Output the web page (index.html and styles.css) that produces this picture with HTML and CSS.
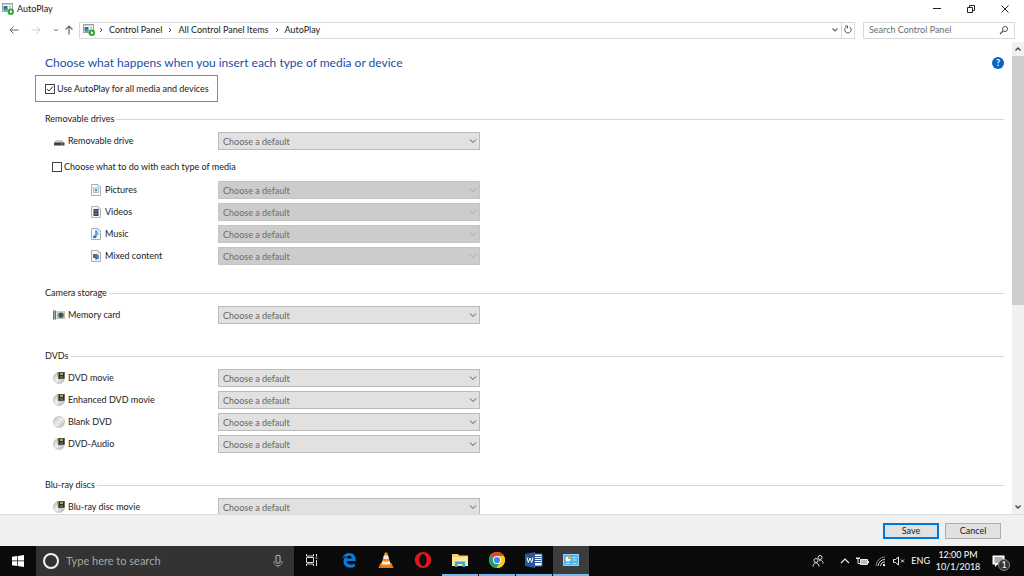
FILE: index.html
```html
<!DOCTYPE html>
<html lang="en">
<head>
    <meta charset="UTF-8">
    <meta name="viewport" content="width=device-width, initial-scale=1.0">
    <title>AutoPlay</title>
    <link rel="stylesheet" href="styles.css">
</head>
<body>
    <svg class="sprite" aria-hidden="true">
        <defs>
            <linearGradient id="disc-shade" x1="0" y1="0" x2="1" y2="1">
                <stop offset="0" stop-color="#b4b4b4"/>
                <stop offset="0.5" stop-color="#f2f2f2"/>
                <stop offset="1" stop-color="#a6a6a6"/>
            </linearGradient>
        </defs>
        <symbol id="autoplay" viewBox="0 0 12 12">
            <rect x="0.5" y="0.5" width="10" height="8" fill="#fff" stroke="#9aa5ab"/>
            <rect x="1" y="1" width="9" height="1" fill="#c6d2d8"/>
            <path d="M1.5 3h4v4.5h-4z" fill="#2e6f8e"/>
            <path d="M3 5h2.5v2.5H2z" fill="#3d9a80"/>
            <path d="M7 3.5h2.5M7 5h2" stroke="#a8b4ba"/>
            <circle cx="8.8" cy="8.8" r="3.2" fill="#2ea52e"/>
            <path d="M8 7v3.6l2.6-1.8z" fill="#fff"/>
        </symbol>
        <symbol id="drive" viewBox="0 0 12 12">
            <path d="M2.5 5h7L11 8H1z" fill="#c9cccc"/>
            <rect x="1" y="7.5" width="10.5" height="3" rx="0.5" fill="#3c4240"/>
            <rect x="8" y="8.5" width="2" height="1" fill="#46c25a"/>
        </symbol>
        <symbol id="page" viewBox="0 0 12 12">
            <path d="M1.5 0.5h6.5l2.5 2.5v8.5h-9z" fill="#f6f7f8" stroke="#aab0b4"/>
            <path d="M8 0.5V3h2.5" fill="#dfe3e6" stroke="#aab0b4" stroke-width="0.6"/>
        </symbol>
        <symbol id="pictures" viewBox="0 0 12 12">
            <use href="#page"/>
            <rect x="3.5" y="4" width="5" height="4.5" fill="#e9f1f7" stroke="#9fb3c2" stroke-width="0.8"/>
            <path d="M5 5.2h2v2H5z" fill="#3f82b0"/>
        </symbol>
        <symbol id="videos" viewBox="0 0 12 12">
            <use href="#page"/>
            <rect x="3.5" y="3" width="5" height="7" fill="#3b3f45"/>
            <path d="M5 4h2v2H5zM5 7h2v2H5z" fill="#5c7390"/>
            <path d="M4 3v7M8 3v7" stroke="#aaa" stroke-width="0.5" stroke-dasharray="0.7 0.7"/>
        </symbol>
        <symbol id="music" viewBox="0 0 12 12">
            <use href="#page"/>
            <path d="M6 2.5v6" stroke="#1673c4" stroke-width="1.2"/>
            <path d="M6 2.5c0 2 2.500 2 2 4.500" fill="none" stroke="#1673c4"/>
            <ellipse cx="4.8" cy="8.8" rx="1.8" ry="1.4" fill="#1673c4"/>
        </symbol>
        <symbol id="mixed" viewBox="0 0 12 12">
            <use href="#page"/>
            <path d="M3 4h4v4H3z" fill="#4c6f8c"/>
            <path d="M6 5.5h3v3.5H6z" fill="#7b93a5"/>
            <path d="M7 4.5v4M7 5l1.5 1" stroke="#1d6fb5"/>
            <circle cx="6.2" cy="8.7" r="1.1" fill="#1d6fb5"/>
        </symbol>
        <symbol id="card" viewBox="0 0 12 12">
            <rect x="0" y="1.5" width="3" height="9" fill="#6d7072"/>
            <rect x="1" y="2" width="1" height="8" fill="#a5a8aa"/>
            <rect x="3.5" y="2" width="8.5" height="8" fill="#b9bcbd"/>
            <rect x="4" y="2.5" width="7.5" height="1" fill="#dedfe0"/>
            <circle cx="8" cy="6.2" r="2.6" fill="#52585a"/>
            <circle cx="8" cy="6.2" r="1.4" fill="#1e5a58"/>
        </symbol>
        <symbol id="disc" viewBox="0 0 12 12">
            <circle cx="6" cy="6" r="5.6" fill="url(#disc-shade)" stroke="#b0b0b0" stroke-width="0.5"/>
            <circle cx="6" cy="6" r="1.6" fill="#f6f6f6" stroke="#c4c4c4" stroke-width="0.5"/>
        </symbol>
        <symbol id="disc-movie" viewBox="0 0 12 12">
            <circle cx="6" cy="6" r="5.6" fill="url(#disc-shade)" stroke="#b0b0b0" stroke-width="0.5"/>
            <path d="M4.5 0H12v6.5L5 7.5z" fill="#6d6e70"/>
            <path d="M6 0.5h5v6H6z" fill="#2d2e31"/>
            <path d="M7 1h3v2H7z" fill="#c79a4e"/>
            <path d="M7 4h3v2H7z" fill="#5a6068"/>
        </symbol>
    </svg>

    <header class="titlebar">
        <svg class="icon"><use href="#autoplay"/></svg>
        <h1 class="window-title">AutoPlay</h1>
        <div class="window-buttons">
            <button aria-label="Minimize"><svg width="10" height="10"><path d="M1 4.5h8" stroke="#222"/></svg></button>
            <button aria-label="Restore"><svg width="10" height="10"><path d="M1.5 3.5h5v5h-5zM3.5 3.5v-2h5v5h-2" fill="none" stroke="#222"/></svg></button>
            <button aria-label="Close"><svg width="10" height="10"><path d="M1.5 1.5l7 7M8.5 1.5l-7 7" stroke="#222"/></svg></button>
        </div>
    </header>

    <nav class="navbar">
        <div class="history">
            <button aria-label="Back"><svg width="10" height="10"><path d="M9.5 5H1M4.5 1.5L1 5l3.5 3.5" fill="none" stroke="#666"/></svg></button>
            <button aria-label="Forward"><svg width="10" height="10"><path d="M0.5 5H9M5.5 1.5L9 5 5.5 8.5" fill="none" stroke="#ccc"/></svg></button>
            <button class="narrow" aria-label="Recent locations"><svg width="6" height="10"><path d="M1 4l2 2 2-2" fill="none" stroke="#777"/></svg></button>
            <button class="narrow" aria-label="Up"><svg width="10" height="10"><path d="M5 9.5V1M1.5 4.5L5 1l3.5 3.5" fill="none" stroke="#666" stroke-width="1.2"/></svg></button>
        </div>
        <div class="address">
            <svg class="icon"><use href="#autoplay"/></svg>
            <svg class="sep" width="4" height="8"><path d="M1 2l2 2-2 2" fill="none" stroke="#555"/></svg>
            <a href="#">Control Panel</a>
            <svg class="sep" width="4" height="8"><path d="M1 2l2 2-2 2" fill="none" stroke="#555"/></svg>
            <a href="#">All Control Panel Items</a>
            <svg class="sep" width="4" height="8"><path d="M1 2l2 2-2 2" fill="none" stroke="#555"/></svg>
            <a href="#">AutoPlay</a>
            <button class="previous" aria-label="Previous locations"><svg width="8" height="8"><path d="M1.500 2.500L4 5l2.500-2.500" fill="none" stroke="#666" stroke-width="1.2"/></svg></button>
            <button class="refresh" aria-label="Refresh"><svg width="10" height="10"><path d="M6.500 2A3.200 3.200 0 1 1 3 2.300M2 1h2.500v2.500" fill="none" stroke="#555"/></svg></button>
        </div>
        <div class="search">
            <input type="text" placeholder="Search Control Panel" aria-label="Search Control Panel">
            <svg width="10" height="10"><circle cx="6" cy="4" r="2.5" fill="none" stroke="#555"/><path d="M4 6L1 9" stroke="#555" stroke-width="1.2"/></svg>
        </div>
    </nav>

    <div class="view">
        <main class="content">
            <div class="heading">
                <h2>Choose what happens when you insert each type of media or device</h2>
                <button class="help" aria-label="Help">?</button>
            </div>
            <div class="highlight">
                <input type="checkbox" id="use-autoplay" checked>
                <label for="use-autoplay">Use AutoPlay for all media and devices</label>
            </div>

            <section class="group group-removable">
                <h3>Removable drives</h3>
                <div class="row">
                    <label for="removable"><svg class="icon"><use href="#drive"/></svg>Removable drive</label>
                    <select id="removable"><option>Choose a default</option></select>
                </div>
                <div class="each-type">
                    <input type="checkbox" id="each-type">
                    <label for="each-type">Choose what to do with each type of media</label>
                </div>
                <div class="row sub">
                    <label for="pics"><svg class="icon"><use href="#pictures"/></svg>Pictures</label>
                    <select id="pics" disabled><option>Choose a default</option></select>
                </div>
                <div class="row sub">
                    <label for="vids"><svg class="icon"><use href="#videos"/></svg>Videos</label>
                    <select id="vids" disabled><option>Choose a default</option></select>
                </div>
                <div class="row sub">
                    <label for="songs"><svg class="icon"><use href="#music"/></svg>Music</label>
                    <select id="songs" disabled><option>Choose a default</option></select>
                </div>
                <div class="row sub">
                    <label for="mixed-content"><svg class="icon"><use href="#mixed"/></svg>Mixed content</label>
                    <select id="mixed-content" disabled><option>Choose a default</option></select>
                </div>
            </section>

            <section class="group">
                <h3>Camera storage</h3>
                <div class="row">
                    <label for="memory-card"><svg class="icon"><use href="#card"/></svg>Memory card</label>
                    <select id="memory-card"><option>Choose a default</option></select>
                </div>
            </section>

            <section class="group">
                <h3>DVDs</h3>
                <div class="row">
                    <label for="dvd"><svg class="icon"><use href="#disc-movie"/></svg>DVD movie</label>
                    <select id="dvd"><option>Choose a default</option></select>
                </div>
                <div class="row">
                    <label for="enhanced-dvd"><svg class="icon"><use href="#disc-movie"/></svg>Enhanced DVD movie</label>
                    <select id="enhanced-dvd"><option>Choose a default</option></select>
                </div>
                <div class="row">
                    <label for="blank-dvd"><svg class="icon"><use href="#disc"/></svg>Blank DVD</label>
                    <select id="blank-dvd"><option>Choose a default</option></select>
                </div>
                <div class="row">
                    <label for="dvd-audio"><svg class="icon"><use href="#disc-movie"/></svg>DVD-Audio</label>
                    <select id="dvd-audio"><option>Choose a default</option></select>
                </div>
            </section>

            <section class="group">
                <h3>Blu-ray discs</h3>
                <div class="row">
                    <label for="bluray"><svg class="icon"><use href="#disc-movie"/></svg>Blu-ray disc movie</label>
                    <select id="bluray"><option>Choose a default</option></select>
                </div>
            </section>
        </main>
        <div class="scrollbar">
            <button aria-label="Scroll up"><svg width="8" height="8"><path d="M1.500 5.500L4 3l2.500 2.500" fill="none" stroke="#444" stroke-width="1.4"/></svg></button>
            <div class="track"><div class="thumb"></div></div>
            <button aria-label="Scroll down"><svg width="8" height="8"><path d="M1.500 2.500L4 5l2.500-2.500" fill="none" stroke="#444" stroke-width="1.4"/></svg></button>
        </div>
    </div>

    <div class="actions">
        <button class="btn btn-default">Save</button>
        <button class="btn">Cancel</button>
    </div>

    <footer class="taskbar">
        <button class="start" aria-label="Start">
            <svg width="12" height="12"><path d="M0 1.700L5.300 1v4.600H0zM6 0.900L12 0v5.600H6zM0 6.300h5.300v4.700L0 10.300zM6 6.300h6V12l-6-0.900z" fill="#fff"/></svg>
        </button>
        <div class="cortana">
            <svg width="18" height="18"><circle cx="9" cy="9" r="7" fill="none" stroke="#f2f2f2" stroke-width="2"/></svg>
            <input type="text" placeholder="Type here to search" aria-label="Type here to search">
            <svg width="10" height="14"><rect x="3" y="1.5" width="4" height="7.5" rx="0.5" fill="none" stroke="#bbb"/><path d="M1 7v2.500L3 11.500h4l2-2V7M5 11.500V13.500" fill="none" stroke="#aaa" stroke-width="0.8"/></svg>
        </div>
        <div class="apps">
            <button aria-label="Task View"><svg width="14" height="14"><path d="M1.500 1v2h7V1M1.500 13v-2h7v2M1.500 4.500h7v5h-7zM11.500 1v2.500M11.500 7v6M10.500 5h2" fill="none" stroke="#ddd"/></svg></button>
            <button aria-label="Edge"><svg width="16" height="16" viewBox="0 0 18 18"><path d="M1.500 8C2.200 3.500 5.200 1 9.200 1c4.600 0 7.300 3.200 7.300 7.400v1.800H6.200c.2 2.700 2.300 4 4.900 4 1.800 0 3.200-.5 4.500-1.300v3.400c-1.500.9-3.300 1.300-5.200 1.300-4.600 0-7.600-2.700-7.600-6.900 0-2.700 1.300-4.900 3.700-6.200C4 4.800 2.300 6 1.500 8zM6.300 7.200H12c0-2-.9-3.100-2.700-3.100-1.700 0-2.800 1.200-3 3.100z" fill="#0f7bd8"/></svg></button>
            <button aria-label="VLC"><svg width="16" height="18" viewBox="0 0 16 18"><path d="M2.500 12h11l2 5H.5z" fill="#e8780c"/><path d="M6.800 1.500h2.400L13 14.500q-5 2-10 0z" fill="#f58a12"/><path d="M6 4.500h4l.9 3q-2.900 1.200-5.800 0zM4.300 10q3.700 1.500 7.400 0l.8 2.700q-4.500 1.700-9 0z" fill="#eee"/></svg></button>
            <button aria-label="Opera"><svg width="18" height="18"><ellipse cx="9" cy="9" rx="8.2" ry="8" fill="#e0161f"/><ellipse cx="9" cy="9" rx="3.6" ry="6" fill="#0a0a0a"/></svg></button>
            <button class="open" aria-label="File Explorer"><svg width="16" height="16"><path d="M0 2h6l1 1.500h9V14H0z" fill="#f3cf6b"/><path d="M0 5h16v9H0z" fill="#fde79b"/><path d="M3 15V9.500h10V15h-2.500v-3h-5v3z" fill="#35a5e0"/></svg></button>
            <button class="open" aria-label="Chrome"><svg width="18" height="18"><circle cx="9" cy="9" r="8" fill="#fbc916"/><path d="M9 9L2.100 5A8 8 0 0 1 15.900 5z" fill="#db4437"/><path d="M2.100 5A8 8 0 0 0 8.500 17L12.500 11 9 9z" fill="#1da260"/><path d="M9 5h6.900A8 8 0 0 1 8.500 17L12.500 11z" fill="#fbc916"/><circle cx="9" cy="9" r="4" fill="#fff"/><circle cx="9" cy="9" r="3.1" fill="#4285f4"/></svg></button>
            <button class="open" aria-label="Word"><svg width="18" height="16"><rect x="8" y="2" width="9" height="12" fill="#fff" stroke="#2b579a"/><path d="M10 4.500h6M10 6.500h6M10 8.500h6M10 10.500h6" stroke="#2b579a"/><path d="M0 2l10-2v16L0 14z" fill="#2b579a"/><path d="M2 5.500l1.300 5L5 6l1.700 4.500L8 5.500" fill="none" stroke="#fff"/></svg></button>
            <button class="open active" aria-label="Control Panel"><svg width="16" height="14"><rect x="0.5" y="1.5" width="15" height="11" fill="#4fb4ea" stroke="#8fd2f5"/><circle cx="5" cy="6" r="2.5" fill="#fff"/><path d="M5 6V3.500A2.500 2.500 0 0 1 7.500 6z" fill="#f5a623"/><path d="M9.500 4.500h4M9.500 7h4M3 10.500h4M9.500 10.500h4" stroke="#c3e8fb"/><path d="M12 4v1M10.500 6.500v1" stroke="#f5c623"/></svg></button>
        </div>
        <div class="tray">
            <button aria-label="People"><svg width="12" height="14"><circle cx="8" cy="3.5" r="2" fill="none" stroke="#ddd"/><circle cx="4" cy="6.5" r="2" fill="none" stroke="#ddd"/><path d="M1 12.500c0-5 6-5 6 0M7 7c2-1.500 4-.5 4 2.500" fill="none" stroke="#ddd"/></svg></button>
            <button aria-label="Show hidden icons"><svg width="10" height="8"><path d="M1 6l4-4 4 4" fill="none" stroke="#eee" stroke-width="1.2"/></svg></button>
            <button aria-label="Battery"><svg width="13" height="10"><path d="M4.500 3.500h7v5h-7z" fill="#bbb" stroke="#eee"/><path d="M12.500 5v2M0 2.500h4M1 1v1.500M3 1v1.500M2 3v4.500h2" fill="none" stroke="#eee"/></svg></button>
            <button aria-label="Network"><svg width="12" height="11"><path d="M1 10A9 9 0 0 1 10 1" fill="none" stroke="#888"/><path d="M3 10a7 7 0 0 1 7-6.500M5.500 10A4.500 4.500 0 0 1 10 6" fill="none" stroke="#ddd"/><circle cx="9" cy="9" r="1.2" fill="#eee"/></svg></button>
            <button aria-label="Volume"><svg width="12" height="10"><path d="M0.500 3.500h2L5.500 1v8L2.500 6.500h-2zM8 3.500l3 3M11 3.500l-3 3" fill="none" stroke="#eee"/></svg></button>
            <button class="lang">ENG</button>
            <button class="clock"><span>12:00 PM</span><span>10/1/2018</span></button>
            <button class="notifications" aria-label="Notifications">
                <svg width="13" height="13"><path d="M0.500 0.500h12v9h-7L3 12V9.500H0.500z" fill="#fff"/><path d="M2.500 3h8M2.500 5h8M2.500 7h5" stroke="#333" stroke-width="0.8"/></svg>
                <span class="badge">1</span>
            </button>
        </div>
    </footer>
</body>
</html>
```

FILE: styles.css
```css
* {
    box-sizing: border-box;
}
body {
    font-family: Lato, "Open Sans", sans-serif;
    font-size: 9px;
    line-height: 12px;
    margin: 0;
    height: 100vh;
    display: flex;
    flex-direction: column;
    overflow: hidden;
    background: #fff;
    color: #1a1a1a;
}
h1, h2, h3 {
    margin: 0;
    font-size: 9px;
    font-weight: normal;
}
button, input, select {
    font: inherit;
    color: inherit;
}
button {
    display: flex;
    align-items: center;
    justify-content: center;
    padding: 0;
    border: none;
    background: none;
}
svg {
    display: block;
    flex: none;
}
.sprite {
    width: 0;
    height: 0;
    position: absolute;
}
.icon {
    width: 12px;
    height: 12px;
}

/* Window frame */
.titlebar {
    display: flex;
    align-items: center;
    gap: 3px;
    height: 18px;
    padding: 0 2px;
}
.window-buttons {
    display: flex;
    margin-left: auto;
}
.window-buttons button {
    width: 34px;
    height: 18px;
}
.navbar {
    display: flex;
    align-items: center;
    height: 24px;
    padding: 0 9px;
}
.history {
    display: flex;
    width: 70px;
}
.history button {
    width: 10px;
    margin-right: 12px;
}
.history .narrow {
    margin-right: 5px;
}
.address {
    flex: 1;
    display: flex;
    align-items: center;
    height: 17px;
    padding-left: 3px;
    border: 1px solid #d9d9d9;
}
.address a {
    color: inherit;
    text-decoration: none;
}
.address .sep {
    margin: 0 6px;
}
.address .icon + .sep {
    margin-left: 4px;
}
.previous {
    width: 12px;
    margin-left: auto;
}
.refresh {
    width: 13px;
    height: 15px;
    border-left: 1px solid #d9d9d9;
}
.search {
    display: flex;
    align-items: center;
    width: 152px;
    height: 17px;
    margin-left: 8px;
    padding: 0 5px;
    border: 1px solid #d9d9d9;
}
.search input {
    flex: 1;
    min-width: 0;
    padding: 0;
    border: none;
    outline: none;
}
.search input::placeholder {
    color: #6d6d6d;
}

/* Settings */
.view {
    flex: 1;
    display: flex;
    min-height: 0;
}
.content {
    flex: 1;
    min-width: 0;
    padding: 13px 8px 0 45px;
    overflow: hidden;
}
.heading {
    display: flex;
    align-items: center;
    justify-content: space-between;
    height: 16px;
}
.heading h2 {
    font-size: 12px;
    line-height: 16px;
    color: #1b4da5;
}
.help {
    width: 12px;
    height: 12px;
    border-radius: 50%;
    background: #0a64c4;
    color: #fff;
    font-weight: bold;
}
.highlight {
    display: flex;
    align-items: center;
    gap: 2px;
    width: 183px;
    height: 27px;
    margin: 4px 0 9px -10px;
    padding-left: 9px;
    border: 1px solid #e8606a;
    white-space: nowrap;
}
input[type="checkbox"] {
    appearance: none;
    width: 10px;
    height: 10px;
    margin: 0;
    border: 1px solid #444;
    background: #fff;
}
input[type="checkbox"]:checked {
    background: url("data:image/svg+xml,%3Csvg xmlns='http://www.w3.org/2000/svg' viewBox='0 0 8 8'%3E%3Cpath d='M1 4l2 2 4-4.500' fill='none' stroke='%23333'/%3E%3C/svg%3E") center / 8px no-repeat;
}
.group {
    padding-bottom: 22px;
}
.group-removable {
    padding-bottom: 18px;
}
.group h3 {
    display: flex;
    align-items: center;
    gap: 2px;
    height: 16px;
    margin-bottom: 3px;
}
.group h3::after {
    content: "";
    flex: 1;
    height: 1px;
    background: #d8d8d8;
}
.row {
    display: grid;
    grid-template-columns: 165px 262px;
    align-items: center;
    height: 22px;
    padding-left: 8px;
}
.row label {
    display: flex;
    align-items: center;
    gap: 3px;
}
.row.sub label {
    padding-left: 37px;
}
.each-type {
    display: flex;
    align-items: center;
    gap: 2px;
    height: 22px;
    margin: 4px 0 1px;
    padding-left: 7px;
}
select {
    appearance: none;
    height: 18px;
    padding: 1px 4px 0;
    border: 1px solid #bbb;
    border-radius: 0;
    background: #e1e1e1 url("data:image/svg+xml,%3Csvg xmlns='http://www.w3.org/2000/svg' viewBox='0 0 8 8'%3E%3Cpath d='M1 2.500l3 3 3-3' fill='none' stroke='%23555'/%3E%3C/svg%3E") right 2px center / 8px no-repeat;
    color: #666;
}
select:disabled {
    border-color: #c4c4c4;
    background-color: #ccc;
    background-image: url("data:image/svg+xml,%3Csvg xmlns='http://www.w3.org/2000/svg' viewBox='0 0 8 8'%3E%3Cpath d='M1 2.500l3 3 3-3' fill='none' stroke='%23a8a8a8'/%3E%3C/svg%3E");
    color: #6d6d6d;
    opacity: 1;
}
.scrollbar {
    display: flex;
    flex-direction: column;
    width: 12px;
    background: #f0f0f0;
}
.scrollbar button {
    height: 14px;
}
.track {
    flex: 1;
}
.thumb {
    height: 56%;
    background: #cdcdcd;
}
.actions {
    display: flex;
    align-items: center;
    justify-content: flex-end;
    gap: 6px;
    height: 32px;
    padding-right: 23px;
    border-top: 1px solid #dcdcdc;
    background: #f0f0f0;
}
.btn {
    width: 56px;
    height: 16px;
    border: 1px solid #adadad;
    background: #e1e1e1;
}
.btn-default {
    border: 2px solid #0078d7;
}

/* Taskbar */
.taskbar {
    display: flex;
    height: 30px;
    background: #0a0a0a;
    color: #fff;
}
.start {
    width: 36px;
}
.cortana {
    display: flex;
    align-items: center;
    gap: 6px;
    width: 258px;
    padding: 0 11px 0 6px;
    background: #333;
}
.cortana input {
    flex: 1;
    min-width: 0;
    padding: 0;
    border: none;
    outline: none;
    background: none;
    font-size: 11px;
}
.cortana input::placeholder {
    color: #a6a6a6;
}
.apps {
    display: flex;
    gap: 1px;
}
.apps button {
    width: 36px;
    border-bottom: 2px solid transparent;
}
.apps .open {
    border-bottom-color: #76b9ed;
}
.apps .active {
    background: #3c3c3c;
}
.tray {
    display: flex;
    align-items: center;
    gap: 6px;
    margin-left: auto;
    padding-right: 12px;
}
.tray button:first-child {
    margin-right: 10px;
}
.clock {
    flex-direction: column;
    width: 44px;
}
.notifications {
    position: relative;
    justify-content: flex-start;
    width: 20px;
    margin-left: 6px;
}
.badge {
    position: absolute;
    left: 6px;
    top: 4px;
    width: 12px;
    height: 12px;
    border: 1px solid #888;
    border-radius: 50%;
    background: #333;
    line-height: 10px;
}
```
